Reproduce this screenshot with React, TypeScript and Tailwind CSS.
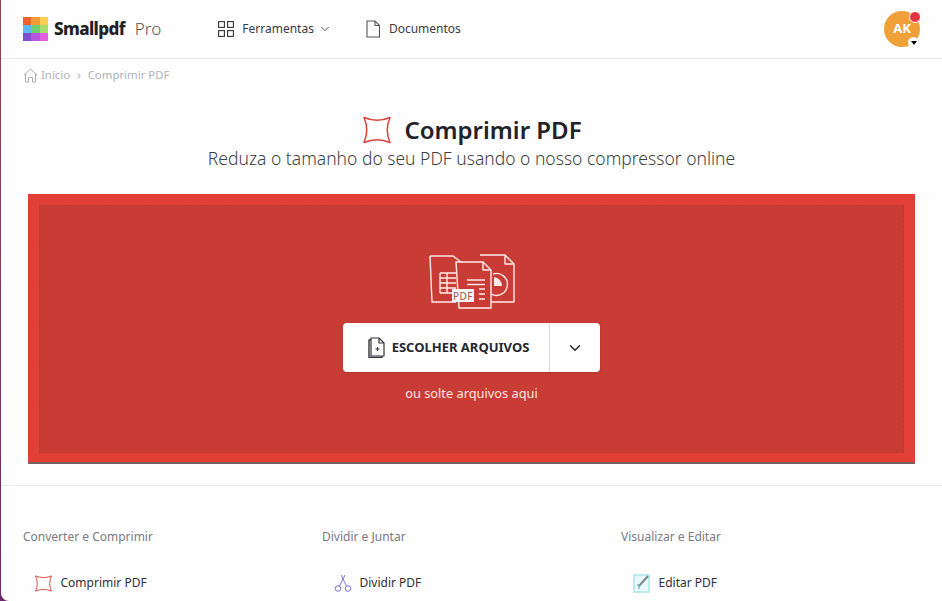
import type { ReactNode } from "react";
import { ChevronDown } from "lucide-react";

const sans = "font-['Noto_Sans','Open_Sans',sans-serif]";

function Logo() {
  const colors = ["#f0602b", "#f49a3a", "#fbcf4f", "#5bb8f0", "#6fcf6f", "#a5dc6a", "#7d4fd0", "#b455e0", "#e35fe0"];
  return (
    <div className="grid h-[25px] w-[25px] grid-cols-3 grid-rows-3">
      {colors.map((c, i) => (
        <span key={i} style={{ backgroundColor: c }} />
      ))}
    </div>
  );
}

function CompressIcon({ size, stroke = "#d9423a" }: { size: number; stroke?: string }) {
  return (
    <svg width={size} height={size} viewBox="0 0 28 28" fill="none" stroke={stroke} strokeWidth="1.5" strokeLinejoin="round">
      <path d="M1 1.5 Q14 7 27 1.5 Q21.5 14 27 26.5 Q14 21 1 26.5 Q6.5 14 1 1.5 Z" />
    </svg>
  );
}

function FilesArt() {
  return (
    <svg width="88" height="56" viewBox="0 0 88 56" fill="none" stroke="#ffecea" strokeWidth="1.4" strokeLinejoin="round">
      <path d="M2 3 H25 L33 9 M2 3 L4 49 H28" />
      <path d="M52 2 H77 L86 11 V49 H62" />
      <path d="M77 2 V11 H86" />
      <path d="M12 20 H28 M12 25 H28 M12 30 H28 M12 35 H28 M12 40 H28 M12 20 V40 M19 20 V40" />
      <path d="M28 9 H55 L63 17 V55 H31 Z" fill="#c93c35" />
      <path d="M55 9 V17 H63" />
      <path d="M39 27 H57 M39 31.5 H57 M51 36 H57 M51 41 H57 M51 46 H57" />
      <path d="M65 21 A11 11 0 1 1 63 41" />
      <path d="M66 24 A9 9 0 0 1 74 33 H66 Z" fill="#ffecea" stroke="none" />
      <rect x="24" y="36" width="22" height="13" fill="#fff6f5" stroke="none" />
      <text x="35" y="46.5" textAnchor="middle" fontSize="10" letterSpacing="0.5" fill="#a9524d" stroke="none">PDF</text>
    </svg>
  );
}

function UploadIcon() {
  return (
    <svg width="17" height="21" viewBox="0 0 17 21" fill="none" stroke="#33333b" strokeWidth="1.2" strokeLinejoin="round">
      <path d="M3 1 H11 L16 6 V19 H3 Z" />
      <path d="M11 1 V6 H16" />
      <path d="M3 3 H1 V20.5 H14 V19" strokeWidth="1.4" />
      <path d="M7.5 12 H11.5 M9.5 10 V14" />
    </svg>
  );
}

function ScissorsIcon() {
  return (
    <svg width="18" height="18" viewBox="0 0 18 18" fill="none" stroke="#7d74d6" strokeWidth="1">
      <circle cx="4" cy="14.5" r="2.8" />
      <circle cx="14" cy="14.5" r="2.8" />
      <path d="M5.5 12 L11 1 M12.5 12 L7 1" />
    </svg>
  );
}

function EditIcon() {
  return (
    <svg width="18" height="20" viewBox="0 0 18 20" fill="none">
      <rect x="1" y="2" width="15" height="17" fill="#e9f8fa" stroke="#a5e3ea" strokeWidth="1.4" />
      <path d="M6 13 L15 3" stroke="#7a8a8c" strokeWidth="2" />
      <path d="M4 12 H8 M6 12 V16" stroke="#5f9ca3" strokeWidth="1" />
    </svg>
  );
}

function GridIcon() {
  return (
    <svg width="16" height="16" viewBox="0 0 16 16" fill="none" stroke="#33333b" strokeWidth="1.1">
      <rect x="0.6" y="0.6" width="5.8" height="5.8" />
      <rect x="9.6" y="0.6" width="5.8" height="5.8" />
      <rect x="0.6" y="9.6" width="5.8" height="5.8" />
      <rect x="9.6" y="9.6" width="5.8" height="5.8" />
    </svg>
  );
}

function FooterColumn({ title, label, icon }: { title: string; label: string; icon: ReactNode }) {
  return (
    <div className="w-[299px]">
      <h3 className="text-[12px] leading-5 text-[#7b7b83]">{title}</h3>
      <div className="mt-[26px] flex h-5 items-center pl-3">
        <span className="flex w-[25.5px] justify-start">{icon}</span>
        <span className="text-[12px] text-[#303036]">{label}</span>
      </div>
    </div>
  );
}

export default function App() {
  return (
    <div className={`${sans} h-[601px] w-[942px] overflow-hidden bg-gradient-to-b from-[#8c4a48] to-[#6b2a6b] pl-px`}>
      <div className="h-full rounded-bl-lg bg-[#fefefe]">
        <header className="flex h-[59px] items-center border-b border-[#e6e6e6] px-[22px]">
          <Logo />
          <span className="ml-[6px] text-[17px] font-extrabold tracking-[-0.6px] text-[#1f1f24]">Smallpdf</span>
          <span className="ml-[10px] text-[17px] font-light text-[#55555c]">Pro</span>
          <span className="ml-[57px]"><GridIcon /></span>
          <span className="ml-[8px] text-[12px] text-[#3c3c43]">Ferramentas</span>
          <ChevronDown className="ml-[4px]" size={14} strokeWidth={1.4} color="#33333b" />
          <svg className="ml-[33px]" width="16" height="18" viewBox="0 0 16 18" fill="none" stroke="#55555c" strokeWidth="1.1">
            <path d="M2 1 H10 L14.5 5.5 V17 H2 Z M10 1 V5.5 H14.5" />
          </svg>
          <span className="ml-[8px] text-[12px] text-[#3c3c43]">Documentos</span>
          <div className="relative ml-auto flex h-9 w-9 items-center justify-center rounded-full bg-[#f0a038] text-[13px] font-bold text-white">
            AK
            <span className="absolute -right-[1px] top-[0px] h-[12px] w-[12px] rounded-full border border-white bg-[#e5343f]" />
            <span className="absolute bottom-[-1px] right-[1px] flex h-[11px] w-[11px] items-center justify-center rounded-full bg-white">
              <span className="border-x-[3.5px] border-t-[4px] border-x-transparent border-t-black" />
            </span>
          </div>
        </header>

        <nav className="flex h-[32px] items-center pl-[22px] text-[11.4px] text-[#b2b2b8]">
          <svg width="15" height="15" viewBox="0 0 15 15" fill="none" stroke="#adadb3" strokeWidth="1">
            <path d="M1 7 L7.5 1 L14 7 M2.5 6 V14 H5.5 V9.5 H9.5 V14 H12.5 V6" />
          </svg>
          <span className="ml-[3px]">Início</span>
          <span className="mx-[7px]">›</span>
          <span>Comprimir PDF</span>
        </nav>

        <div className="mt-[23px] flex items-center justify-center gap-[13px] pl-[2px]">
          <CompressIcon size={28} />
          <h1 className="text-[24px] leading-8 font-semibold text-[#212126]">Comprimir PDF</h1>
        </div>
        <p className="text-center text-[17.5px] leading-6 font-light text-[#3f3f45]">
          Reduza o tamanho do seu PDF usando o nosso compressor online
        </p>

        <section className="mt-[24px] ml-[27px] h-[270px] w-[887px] border-b-2 border-b-[#77615f] bg-[#e23f36] p-[11px] pb-[9px]">
          <div className="flex h-full flex-col items-center border border-dashed border-[#b93a33] bg-[#c93c35] pt-[47px]">
            <FilesArt />
            <div className="mt-[14px] flex h-[49px] w-[257px] rounded bg-white shadow-sm">
              <button className="flex w-[207px] items-center justify-center gap-[7px] border-r border-[#d8dce6] pl-[5px] text-[13px] font-bold text-[#26262c]">
                <UploadIcon />
                ESCOLHER ARQUIVOS
              </button>
              <button className="flex flex-1 items-center justify-center">
                <ChevronDown size={18} strokeWidth={2} color="#26262c" />
              </button>
            </div>
            <p className="mt-[11px] text-[12.8px] leading-5 text-[#fbe3e0]">ou solte arquivos aqui</p>
          </div>
        </section>

        <div className="mt-[21px] flex border-t border-[#ececec] pt-[41px] pl-[22px]">
          <FooterColumn title="Converter e Comprimir" label="Comprimir PDF" icon={<CompressIcon size={17} />} />
          <FooterColumn title="Dividir e Juntar" label="Dividir PDF" icon={<ScissorsIcon />} />
          <FooterColumn title="Visualizar e Editar" label="Editar PDF" icon={<EditIcon />} />
        </div>
      </div>
    </div>
  );
}
